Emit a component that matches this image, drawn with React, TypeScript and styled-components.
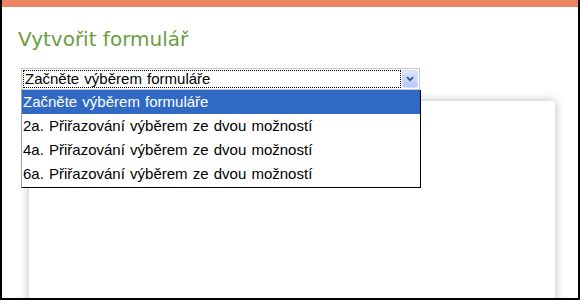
import React from 'react';
import styled, {createGlobalStyle} from 'styled-components';

const GlobalStyle = createGlobalStyle`
    html, body {
        margin: 0;
        padding: 0;
        background: #fff;
        overflow: hidden;
    }
`;

const options = [
    'Začněte výběrem formuláře',
    '2a. Přiřazování výběrem ze dvou možností',
    '4a. Přiřazování výběrem ze dvou možností',
    '6a. Přiřazování výběrem ze dvou možností',
];

/**
 * ChevronIcon
 */
const ChevronIcon = () => (
    <svg width="8" height="6" viewBox="0 0 8 6">
        <path d="M1 1.2 L4 4.2 L7 1.2" fill="none" stroke="#3e5583" strokeWidth="1.8" />
    </svg>
);

/**
 * App
 */
const App = () => {
    return <Frame>
        <GlobalStyle />
        <TopBar />

        <Content>
            <Title>Vytvořit formulář</Title>

            <SelectWrap>
                <SelectBox>
                    <SelectValue>
                        <FocusText>{options[0]}</FocusText>
                    </SelectValue>
                    <ArrowButton>
                        <ChevronIcon />
                    </ArrowButton>
                </SelectBox>

                <OptionList>
                    {options.map((item, idx) => (
                        <OptionRow key={item} $active={idx === 0}>{item}</OptionRow>
                    ))}
                </OptionList>
            </SelectWrap>

            <Panel />
        </Content>
    </Frame>;
};

export default App;



const Frame = styled.div`
    width: 580px;
    height: 300px;
    box-sizing: border-box;
    border: 2px solid #000;
    border-top: none;
    display: flex;
    flex-direction: column;
    overflow: hidden;
    background: #fff;
`;


const TopBar = styled.div`
    height: 7px;
    margin: 0 -2px;
    background: #ec8662;
    flex-shrink: 0;
`;


const Content = styled.div`
    flex: 1;
    display: flex;
    flex-direction: column;
    padding: 0 0 0 16px;
    min-height: 0;
`;


const Title = styled.h1`
    margin: 20px 0 0 0;
    font-family: "DejaVu Sans", Verdana, sans-serif;
    font-weight: normal;
    font-size: 20px;
    line-height: 24px;
    color: #6a9e3f;
`;


const SelectWrap = styled.div`
    position: relative;
    margin: 17px 0 0 3px;
    width: 400px;
    z-index: 2;
`;


const SelectBox = styled.div`
    box-sizing: border-box;
    height: 22px;
    width: 399px;
    display: flex;
    border: 1px solid #c6c6c6;
    background: #fff;
`;


const SelectValue = styled.div`
    flex: 1;
    display: flex;
    padding: 1px;
    min-width: 0;
`;


const FocusText = styled.div`
    flex: 1;
    border: 1px dotted #000;
    font-family: "Liberation Sans", Arial, sans-serif;
    font-size: 15px;
    word-spacing: 1px;
    line-height: 16px;
    color: #000;
    padding-left: 1px;
    white-space: nowrap;
    overflow: hidden;
`;


const ArrowButton = styled.div`
    width: 16px;
    margin: 1px 1px 1px 0;
    display: flex;
    align-items: center;
    justify-content: center;
    border-radius: 2px;
    background: linear-gradient(180deg, #dbe6fd 0%, #c3d4fb 60%, #b5c9f7 100%);
    border: 1px solid #d3ddf5;
    box-sizing: border-box;
`;


const OptionList = styled.div`
    position: absolute;
    top: 22px;
    left: 0;
    width: 400px;
    box-sizing: border-box;
    border: 1px solid #000;
    border-top: none;
    border-left-color: #a0a0a0;
    background: #fff;
    padding-bottom: 1px;
`;


const OptionRow = styled.div<{$active: boolean}>`
    height: 24px;
    line-height: 24px;
    padding-left: 1px;
    font-family: "Liberation Sans", Arial, sans-serif;
    font-size: 15px;
    word-spacing: 1px;
    white-space: nowrap;
    color: ${props => props.$active ? '#fff' : '#000'};
    background: ${props => props.$active ? '#316ac5' : 'transparent'};
`;


const Panel = styled.div`
    margin: 11px 23px -20px 11px;
    flex: 1;
    background: #fff;
    box-shadow: 0 0 9px rgba(0, 0, 0, 0.28);
`;
